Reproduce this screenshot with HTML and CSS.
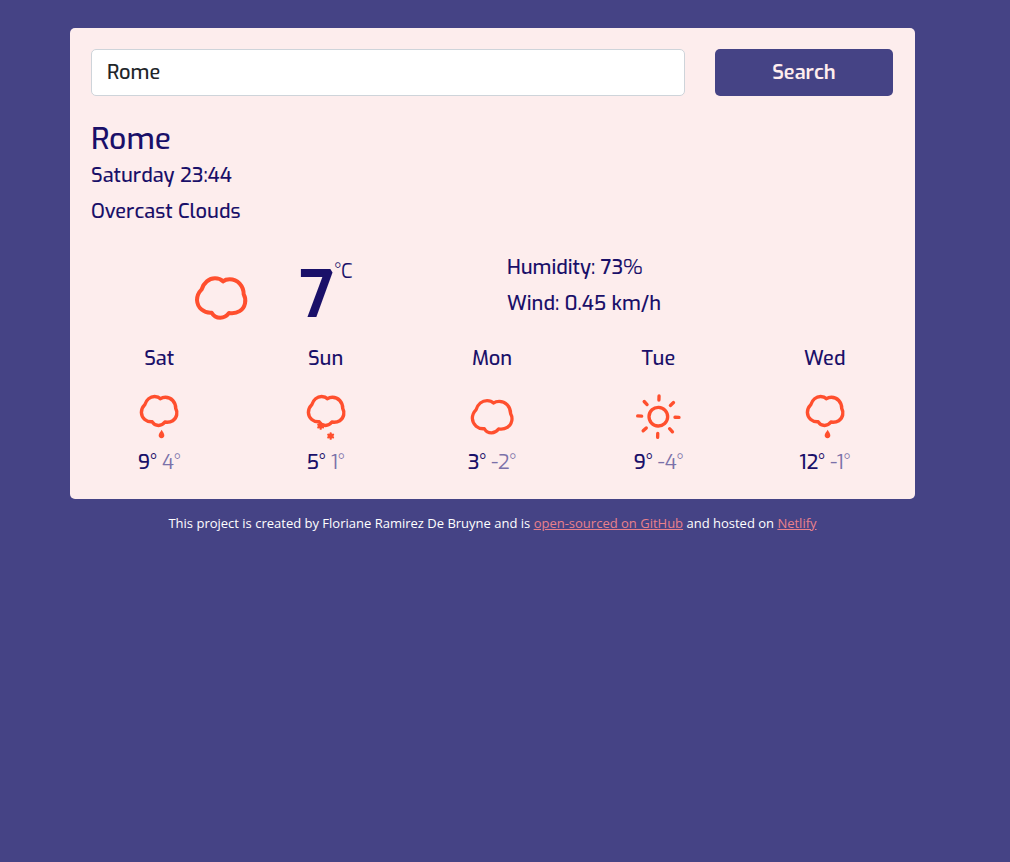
FILE: index.html
```html
<!DOCTYPE html>
<html lang="en">
<head>
<meta charset="utf-8">
<meta name="viewport" content="width=device-width, initial-scale=1">
<title>Weather</title>
<link rel="stylesheet" href="styles.css">
</head>
<body>
<svg class="defs" aria-hidden="true">
  <defs>
    <path id="cloud" d="M68 118C74 98 90 85 108 85C118 85 127 89 132 94C137 90 144 88 152 88C176 88 194 108 194 133C199 142 200 152 198 160C194 180 175 193 150 189C144 197 135 203 124 203C112 203 103 197 98 188C75 190 55 174 54 150C54 138 60 126 68 118Z"/>
    <g id="rain">
      <use href="#cloud" class="line small" transform="translate(75.5 57) scale(.735) translate(-126.5 -144)"/>
      <path class="fill" d="M83 113C86 120 91 123 91 130A8.500 8.500 0 0 1 74 130C74 123 80 120 83 113Z"/>
    </g>
    <path id="flake" d="M0-8V8M-7-4L7 4M-7 4L7-4"/>
  </defs>
</svg>
<main class="card">
  <form class="search">
    <input class="search-input" type="text" value="Rome" aria-label="City">
    <button class="search-button" type="button">Search</button>
  </form>
  <h1 class="city">Rome</h1>
  <p class="line-text">Saturday 23:44</p>
  <p class="line-text">Overcast Clouds</p>
  <section class="current">
    <div class="now">
      <svg class="now-icon" viewBox="36 69 174 150" role="img" aria-label="Overcast clouds"><use href="#cloud" class="line"/></svg>
      <strong class="degrees">7</strong><span class="unit">°C</span>
    </div>
    <div class="details">
      <p class="line-text">Humidity: 73%</p>
      <p class="line-text">Wind: 0.45 km/h</p>
    </div>
  </section>
  <section class="forecast">
    <div class="day">
      <div class="line-text">Sat</div>
      <svg class="day-icon" viewBox="0 0 150 150" role="img" aria-label="Rain"><use href="#rain"/></svg>
      <div class="line-text">9° <span class="low">4°</span></div>
    </div>
    <div class="day">
      <div class="line-text">Sun</div>
      <svg class="day-icon" viewBox="0 0 150 150" role="img" aria-label="Snow">
        <use href="#cloud" class="line small" transform="translate(75.500 57) scale(.735) translate(-126.500 -144)"/>
        <use href="#flake" class="snow" x="59" y="102"/>
        <use href="#flake" class="snow" x="89" y="132"/>
      </svg>
      <div class="line-text">5° <span class="low">1°</span></div>
    </div>
    <div class="day">
      <div class="line-text">Mon</div>
      <svg class="day-icon" viewBox="0 0 150 150" role="img" aria-label="Clouds"><use href="#cloud" class="line" transform="translate(75.500 74) scale(.82) translate(-126.500 -144)"/></svg>
      <div class="line-text">3° <span class="low">-2°</span></div>
    </div>
    <div class="day">
      <div class="line-text">Tue</div>
      <svg class="day-icon" viewBox="0 0 150 150" role="img" aria-label="Sunny">
        <g class="sun" transform="rotate(2 76 74)">
          <circle cx="76" cy="74" r="28"/>
          <path d="M76 12V24M76 124V136M14 74H26M126 74H138M32 30L41 39M111 109L120 118M120 30L111 39M41 109L32 118"/>
        </g>
      </svg>
      <div class="line-text">9° <span class="low">-4°</span></div>
    </div>
    <div class="day">
      <div class="line-text">Wed</div>
      <svg class="day-icon" viewBox="0 0 150 150" role="img" aria-label="Rain"><use href="#rain"/></svg>
      <div class="line-text">12° <span class="low">-1°</span></div>
    </div>
  </section>
</main>
<footer class="credit">This project is created by Floriane Ramirez De Bruyne and is <a href="#">open-sourced on GitHub</a> and hosted on <a href="#">Netlify</a></footer>
</body>
</html>
```
FILE: styles.css
```css
* { box-sizing: border-box; }
body {
  margin: 0;
  padding: 28px 95px 28px 70px;
  background: #454385;
  color: #1a1069;
  font: 500 20px/36px Exo, "Exo 2", Roboto, sans-serif;
}
.defs { position: absolute; width: 0; height: 0; }
.card {
  padding: 21px 22px 18px 21px;
  border-radius: 5px;
  background: #fdeded;
}
.search {
  display: grid;
  grid-template-columns: 10fr 3fr;
  gap: 30px;
}
.search-input, .search-button {
  min-width: 0;
  height: 47px;
  border-radius: 5px;
  font: inherit;
}
.search-input {
  padding: 0 15px;
  border: 1px solid #ced4da;
  background: #fff;
  color: #212529;
}
.search-button {
  padding: 0;
  border: 0;
  background: #454385;
  color: #ffeded;
  font-weight: 600;
}
.city {
  margin: 24px 0 0;
  font-size: 30px;
  font-weight: 500;
  line-height: 38px;
}
.line-text { margin: 0; }
.current {
  display: grid;
  grid-template-columns: 1fr 1fr;
  gap: 30px;
  margin-top: 20px;
}
.now {
  display: flex;
  justify-content: center;
  align-items: flex-start;
  padding-right: 24px;
}
.now-icon {
  width: 58px;
  height: 50px;
  margin: 23px 50px 0 0;
}
.degrees {
  height: 91px;
  font-size: 64px;
  font-weight: 600;
  line-height: 92px;
}
.unit { margin-top: 4px; font-weight: 400; }
.line {
  fill: none;
  stroke: #ff4f2e;
  stroke-width: 12;
  stroke-linejoin: round;
}
.small { stroke-width: 14; }
.fill { fill: #ff4f2e; }
.snow { stroke: #ff4f2e; stroke-width: 7; stroke-linecap: round; }
.sun {
  fill: none;
  stroke: #ff4f2e;
  stroke-width: 10;
  stroke-linecap: round;
}
.forecast {
  display: grid;
  grid-template-columns: repeat(5, 1fr);
  margin: 0 -15px;
  text-align: center;
}
.day-icon {
  display: block;
  width: 50px;
  height: 50px;
  margin: 15px auto 3px;
}
.low { color: #7b71a9; font-weight: 400; }
.credit {
  margin-top: 14px;
  color: #fff;
  font: 400 13px/20px "Segoe UI", "Open Sans", sans-serif;
  text-align: center;
}
.credit a { color: #e9808b; }
```
